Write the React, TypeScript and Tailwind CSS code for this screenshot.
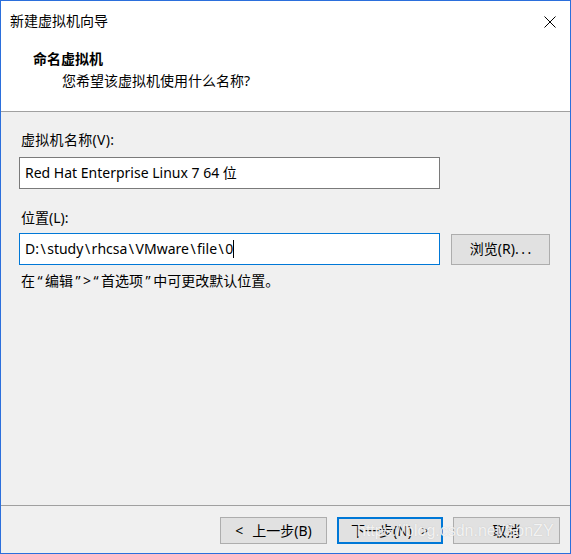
import React from "react";

const font = {
  fontFamily: '"Noto Sans", "Noto Sans CJK SC", "Microsoft YaHei", sans-serif',
};

const Q = ({ c }: { c: string }) => (
  <span className="inline-block mx-[2.5px]" style={{ fontFamily: '"Noto Sans", sans-serif' }}>
    {c}
  </span>
);

const BS = () => <span className="inline-block px-[1.5px]">\</span>;

export default function App() {
  return (
    <div
      className="relative w-[571px] h-[554px] border border-[#2b6fdc] bg-[#f0f0f0] flex flex-col text-[14px] text-black overflow-hidden"
      style={font}
    >
      {/* Header */}
      <div className="bg-white h-[111px] border-b border-[#a0a0a0] flex flex-col shrink-0">
        <div className="h-[40px] flex items-center justify-between pl-[9px] pr-[14px]">
          <span className="leading-[20px]">新建虚拟机向导</span>
          <svg width="12" height="12" viewBox="0 0 12 12" className="mt-[1px]">
            <path d="M0.5 0.5 L11.5 11.5 M11.5 0.5 L0.5 11.5" stroke="#000" strokeWidth="1" />
          </svg>
        </div>
        <div className="pl-[32px] mt-[8px] leading-[20px] font-bold">命名虚拟机</div>
        <div className="pl-[61px] mt-[2px] leading-[20px]">您希望该虚拟机使用什么名称?</div>
      </div>

      {/* Body */}
      <div className="flex-1 flex flex-col pl-[18px]">
        <div className="mt-[18px] pl-[2px] leading-[20px] tracking-[0.3px]">虚拟机名称(V):</div>
        <div className="mt-[7px] w-[421px] h-[32px] bg-white border border-[#7a7a7a] flex items-center pl-[5px] leading-[20px]">
          Red Hat Enterprise Linux 7 64 位
        </div>
        <div className="mt-[19px] pl-[2px] leading-[20px]">位置(L):</div>
        <div className="mt-[5px] flex items-center">
          <div className="w-[421px] h-[32px] bg-white border border-[#0078d7] flex items-center pl-[5px] leading-[20px] whitespace-nowrap">
            <span>
              D:<BS />study<BS />rhcsa<BS />VMware<BS />file<BS />0
            </span>
            <span className="inline-block w-[1px] h-[18px] bg-black" />
          </div>
          <button className="ml-[11px] w-[99px] h-[31px] bg-[#e1e1e1] border border-[#adadad] flex items-center justify-center leading-[20px] whitespace-nowrap">
            浏览(R)<span className="tracking-[2.5px] mr-[-2.5px]">...</span>
          </button>
        </div>
        <div className="mt-[6px] pl-[2px] leading-[20px] whitespace-nowrap">
          在<Q c="“" />编辑<Q c="”" />&gt;<Q c="“" />首选项<Q c="”" />中可更改默认位置。
        </div>
      </div>

      {/* Footer */}
      <div className="h-[48px] border-t border-[#a0a0a0] shrink-0 flex items-start justify-end pr-[10px] pt-[11px] gap-[10px]">
        <button className="w-[107px] h-[27px] bg-[#e1e1e1] border border-[#adadad] flex items-center justify-center leading-[20px] whitespace-nowrap">
          <span className="inline-block mr-[9px]">&lt;</span>上一步(B)
        </button>
        <button className="w-[106px] h-[27px] bg-[#e1e1e1] border-2 border-[#0078d7] flex items-center justify-center leading-[20px] whitespace-nowrap">
          下一步(N)<span className="inline-block ml-[9px]">&gt;</span>
        </button>
        <button className="w-[107px] h-[27px] bg-[#e1e1e1] border border-[#adadad] flex items-center justify-center leading-[20px]">
          取消
        </button>
      </div>

      {/* Watermark */}
      <span
        className="absolute left-[356px] top-[519px] text-[16px] leading-[22px] text-white/80 pointer-events-none whitespace-nowrap"
        style={{ fontFamily: '"Liberation Sans", Arial, sans-serif', textShadow: "0 0 1px rgba(160,160,160,0.6)" }}
      >
        https://blog.csdn.net/SonZY
      </span>
    </div>
  );
}
